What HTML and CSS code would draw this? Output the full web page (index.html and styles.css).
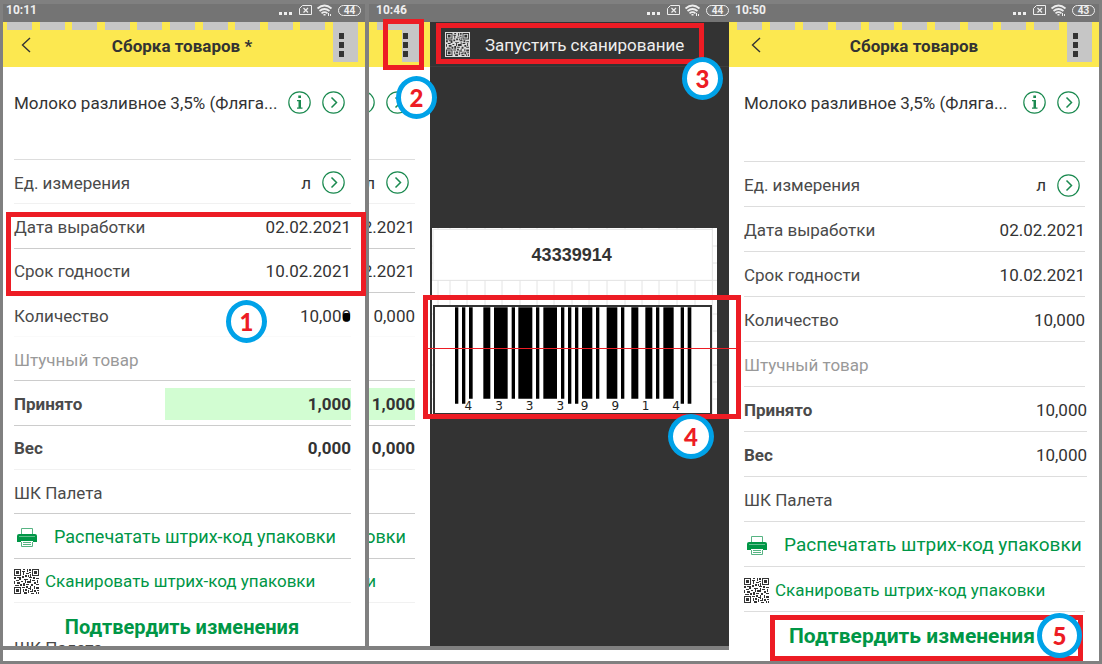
FILE: index.html
```html
<!DOCTYPE html>
<html lang="ru">

<head>
    <meta charset="UTF-8">
    <meta name="viewport" content="width=device-width, initial-scale=1.0">
    <title>Сборка товаров</title>
    <link rel="stylesheet" href="styles.css">
</head>

<body>
<svg class="defs" aria-hidden="true">
    <symbol id="qr" viewBox="0 0 25 25">
        <path d="M0 0h7v7h-7zM1 1v5h5v-5zM18 0h7v7h-7zM19 1v5h5v-5zM0 18h7v7h-7zM1 19v5h5v-5z" fill-rule="evenodd"/>
        <path d="M2 2h3v3h-3zM20 2h3v3h-3zM2 20h3v3h-3z"/>
        <path d="M9 0h2v1h-2zM13 0h1v3h-1zM15 0h2v2h-2zM8 2h3v1h-3zM9 3h1v3h-1zM12 4h3v1h-3zM15 3h2v1h-2zM11 6h2v2h-2zM14 6h1v2h-1zM16 5h1v3h-1zM8 7h2v2h-2z
        M0 8h2v2h-2zM3 8h4v1h-4zM5 9h2v2h-2zM2 11h3v1h-3zM0 12h1v3h-1zM3 13h3v2h-3zM7 12h2v1h-2zM1 16h4v1h-4zM6 15h2v2h-2z
        M10 10h4v1h-4zM11 11h1v3h-1zM13 12h3v2h-3zM9 14h2v3h-2zM12 15h3v1h-3zM16 10h1v4h-1zM15 8h3v1h-3z
        M19 8h2v2h-2zM22 9h3v1h-3zM18 11h3v1h-3zM23 11h1v3h-1zM20 13h2v2h-2zM17 15h2v2h-2zM22 15h3v1h-3zM20 17h1v3h-1z
        M8 18h3v1h-3zM9 20h1v3h-1zM11 20h2v2h-2zM12 17h2v2h-2zM14 19h3v1h-3zM16 17h1v4h-1zM14 21h1v3h-1zM10 23h3v2h-3zM16 22h3v1h-3zM18 20h1v2h-1zM17 24h3v1h-3zM20 21h2v2h-2zM22 18h3v2h-3zM23 21h2v1h-2zM22 23h1v2h-1zM24 23h1v2h-1z"/>
    </symbol>
    <symbol id="next" viewBox="0 0 23 23">
        <circle cx="11.500" cy="11.500" r="10.700" fill="none" stroke="#1b8a50" stroke-width="1.200"/>
        <path d="M9.500 6.500l5 5-5 5" fill="none" stroke="#1b8a50" stroke-width="1.500"/>
    </symbol>
    <symbol id="info" viewBox="0 0 23 23">
        <circle cx="11.500" cy="11.500" r="10.700" fill="none" stroke="#1b8a50" stroke-width="1.200"/>
        <path d="M10.300 4.500h2.700v2.500h-2.700zM9 9h4v7.500h1.500v1.200H9v-1.200h1.500v-6.300H9z" fill="#1b8a50"/>
    </symbol>
    <symbol id="back" viewBox="0 0 10 16">
        <path d="M9 1L1.500 8L9 15" fill="none" stroke="#333" stroke-width="1.400"/>
    </symbol>
    <symbol id="printer" viewBox="0 0 20 19">
        <path d="M4.500 6V.5h11V6" fill="none" stroke="#57b483" stroke-width="1"/>
        <path d="M2 6h16q2 0 2 2v6H0V8q0-2 2-2z" fill="#009646"/>
        <path d="M2 8.500h16" stroke="#66bf91" stroke-width="1"/>
        <path d="M4 13h12v5.500H4z" fill="#fff"/>
        <path d="M4.500 14v4.500h11V14M6 14.500h8M6 16.500h8" fill="none" stroke="#57b483" stroke-width="1"/>
    </symbol>
    <symbol id="signal" viewBox="0 0 54 12">
        <path d="M0 8h3v3H0zM5 8h3v3H5zM10 8h3v3h-3z" fill="#eee"/>
        <path d="M23.500 1.500h9v9h-12V4.500z" fill="none" stroke="#eee" stroke-width="1"/>
        <path d="M24.500 4l4.500 4.500M29 4l-4.500 4.500" stroke="#eee" stroke-width="1.200"/>
        <path d="M38.500 4.500q7-6 14 0M40.500 7q5-4 10 0M42.500 9.300q3-2.300 6 0" fill="none" stroke="#eee" stroke-width="1.700"/>
        <path d="M44.500 10h2v1.500h-2zM49 9h1v3h-1zM51 10h1v2h-1z" fill="#eee"/>
    </symbol>
</svg>

<main class="board">
    <section class="panel panel-first">
        <div class="status">
            <span>10:11</span>
            <svg class="signal"><use href="#signal"/></svg>
            <span class="battery">44</span>
        </div>
        <header class="top">
            <div class="tiles"><i></i><i></i><i></i><i></i><i></i><i></i><i></i><i></i><i></i><i></i>
                <button class="menu" aria-label="Меню"><b></b><b></b><b></b></button>
            </div>
            <button class="back" aria-label="Назад"><svg><use href="#back"/></svg></button>
            <h1>Сборка товаров *</h1>
        </header>
        <div class="product">
            <span class="name">Молоко разливное 3,5% (Фляга...</span>
            <button class="round" aria-label="Информация"><svg><use href="#info"/></svg></button>
            <button class="round" aria-label="Открыть"><svg><use href="#next"/></svg></button>
        </div>
        <div class="rows">
            <div class="row faint"><span>Ед. измерения</span><span class="unit">л</span>
                <button class="round" aria-label="Выбрать"><svg><use href="#next"/></svg></button></div>
            <div class="row"><span>Дата выработки</span><span class="value">02.02.2021</span></div>
            <div class="row"><span>Срок годности</span><span class="value">10.02.2021</span></div>
            <div class="row clear"><span>Количество</span><span class="value locked">10,000</span></div>
            <div class="row off"><span>Штучный товар</span></div>
            <div class="row strong"><label for="accepted">Принято</label><input id="accepted" class="field" type="text" value="1,000"></div>
            <div class="row strong faint"><span>Вес</span><span class="value">0,000</span></div>
            <div class="row"><span>ШК Палета</span></div>
            <div class="row"><button class="action print"><svg class="printer"><use href="#printer"/></svg>Распечатать штрих-код упаковки</button></div>
            <div class="row faint"><button class="action"><svg class="qr"><use href="#qr"/></svg>Сканировать штрих-код упаковки</button></div>
        </div>
        <div class="bottom">
            <button class="confirm">Подтвердить изменения</button>
            <div class="under">ШК Палета</div>
        </div>
        <div class="frame frame-dates"></div>
        <div class="mark mark-1">1</div>
    </section>

    <section class="panel panel-scan">
        <div class="status">
            <span>10:46</span>
            <svg class="signal"><use href="#signal"/></svg>
            <span class="battery">44</span>
        </div>
        <div class="split">
            <div class="edge">
                <header class="top">
                    <div class="tiles"><i></i>
                        <button class="menu" aria-label="Меню"><b></b><b></b><b></b></button>
                    </div>
                </header>
                <div class="product">
                    <button class="round" aria-label="Информация"><svg><use href="#info"/></svg></button>
                    <button class="round" aria-label="Открыть"><svg><use href="#next"/></svg></button>
                </div>
                <div class="rows">
                    <div class="row faint"><span class="unit">л</span>
                        <button class="round" aria-label="Выбрать"><svg><use href="#next"/></svg></button></div>
                    <div class="row"><span class="value">2.2021</span></div>
                    <div class="row"><span class="value">2.2021</span></div>
                    <div class="row clear"><span class="value">0,000</span></div>
                    <div class="row"></div>
                    <div class="row strong"><span class="value field">1,000</span></div>
                    <div class="row strong faint"><span class="value">0,000</span></div>
                    <div class="row"></div>
                    <div class="row"><span class="action print">овки</span></div>
                    <div class="row faint"><span class="action">и</span></div>
                </div>
            </div>
            <div class="drawer">
                <button class="scan"><svg class="qr qr-light"><use href="#qr"/></svg>Запустить сканирование</button>
                <svg class="barcode" viewBox="0 0 855 561" role="img" aria-label="43339914">
                    <rect width="855" height="561" fill="#fff"/>
                    <path d="M18 0v561M54 0v561M105 0v561M159 0v561M210 0v561M264 0v561M315 0v561M366 0v561M420 0v561M471 0v561M525 0v561M579 0v561M630 0v561M681 0v561M735 0v561M789 0v561M841 0v561M0 54h855M0 105h855M0 157h855M0 207h855M0 258h855M0 309h855M0 360h855M0 411h855M0 462h855M0 513h855" stroke="#e4e4e4" stroke-width="3"/>
                    <rect x="3" y="4" width="838" height="153" fill="#fff" stroke="#e4e4e4" stroke-width="3"/>
                    <text x="419" y="98" class="code">43339914</text>
                    <g transform="translate(-36 186)">
                        <rect x="42" y="48" width="831" height="324" fill="#fff" stroke="#333" stroke-width="6"/>
                        <path d="M105 52h10v289h-10zM126 52h10v289h-10zM147 52h11v274h-11zM190 52h21v274h-21zM222 52h41v274h-41zM275 52h10v274h-10zM295 52h42v274h-42zM348 52h10v274h-10zM370 52h41v274h-41zM423 52h10v274h-10zM444 52h10v289h-10zM465 52h10v289h-10zM486 52h31v274h-31zM528 52h10v274h-10zM560 52h32v274h-32zM603 52h10v274h-10zM634 52h21v274h-21zM676 52h21v274h-21zM708 52h10v274h-10zM730 52h31v274h-31zM782 52h10v289h-10zM803 52h11v289h-11z"/>
                        <g class="digits">
                            <text x="145" y="359">4</text><text x="237" y="359">3</text><text x="329" y="359">3</text><text x="421" y="359">3</text>
                            <text x="494" y="359">9</text><text x="586" y="359">9</text><text x="677" y="359">1</text><text x="768" y="359">4</text>
                        </g>
                    </g>
                </svg>
            </div>
        </div>
        <div class="frame frame-menu"></div>
        <div class="frame frame-scan"></div>
        <div class="frame frame-code"></div>
        <div class="mark mark-2">2</div>
        <div class="mark mark-3">3</div>
        <div class="mark mark-4">4</div>
    </section>

    <section class="panel panel-last">
        <div class="status">
            <span>10:50</span>
            <svg class="signal"><use href="#signal"/></svg>
            <span class="battery">43</span>
        </div>
        <header class="top">
            <div class="tiles"><i></i><i></i><i></i><i></i><i></i><i></i><i></i><i></i><i></i><i></i>
                <button class="menu" aria-label="Меню"><b></b><b></b><b></b></button>
            </div>
            <button class="back" aria-label="Назад"><svg><use href="#back"/></svg></button>
            <h1>Сборка товаров</h1>
        </header>
        <div class="product">
            <span class="name">Молоко разливное 3,5% (Фляга...</span>
            <button class="round" aria-label="Информация"><svg><use href="#info"/></svg></button>
            <button class="round" aria-label="Открыть"><svg><use href="#next"/></svg></button>
        </div>
        <div class="rows">
            <div class="row"><span>Ед. измерения</span><span class="unit">л</span>
                <button class="round" aria-label="Выбрать"><svg><use href="#next"/></svg></button></div>
            <div class="row"><span>Дата выработки</span><span class="value">02.02.2021</span></div>
            <div class="row"><span>Срок годности</span><span class="value">10.02.2021</span></div>
            <div class="row"><span>Количество</span><span class="value">10,000</span></div>
            <div class="row off"><span>Штучный товар</span></div>
            <div class="row wide"><strong>Принято</strong><span class="value">10,000</span></div>
            <div class="row wide"><strong>Вес</strong><span class="value">10,000</span></div>
            <div class="row"><span>ШК Палета</span></div>
            <div class="row"><button class="action print"><svg class="printer"><use href="#printer"/></svg>Распечатать штрих-код упаковки</button></div>
            <div class="row"><button class="action"><svg class="qr"><use href="#qr"/></svg>Сканировать штрих-код упаковки</button></div>
        </div>
        <div class="bottom">
            <button class="confirm">Подтвердить изменения</button>
        </div>
        <div class="frame frame-confirm"></div>
        <div class="mark mark-5">5</div>
    </section>

    <div class="strip"></div>
</main>
</body>

</html>
```
FILE: styles.css
```css
* {
  box-sizing: border-box;
}
body {
  margin: 0;
  background: #808080;
  color: #4a4a4a;
  font: 17px/20px Roboto, "Liberation Sans", sans-serif;
}
button, input {
  margin: 0;
  padding: 0;
  border: 0;
  background: none;
  color: inherit;
  font: inherit;
}
svg {
  display: block;
}
.defs {
  position: absolute;
  width: 0;
  height: 0;
}
.board {
  display: grid;
  grid-template-columns: 369fr 360fr 373fr;
  grid-template-rows: auto 11px;
  row-gap: 4px;
  padding: 4px 0 3px;
}
.panel {
  position: relative;
  display: flex;
  flex-direction: column;
  min-width: 0;
  background: #fff;
}
.panel-first {
  border-left: 3px solid #808080;
  border-right: 4px solid #808080;
}
.panel-scan {
  z-index: 1;
  background: #333;
}
.panel-last {
  grid-row: 1 / 3;
  grid-column: 3;
  border-right: 3px solid #808080;
}
.strip {
  grid-column: 1 / 3;
  margin-left: 3px;
  background: #fff;
}

/* status bar */
.status {
  display: flex;
  align-items: center;
  height: 18px;
  padding: 0 4px 6px 3px;
  background: #747474;
  color: #eee;
  font-size: 12px;
  font-weight: 700;
  line-height: 12px;
}
.panel-scan .status {
  padding-left: 7px;
  padding-right: 0;
}
.panel-last .status {
  padding-left: 6px;
}
.signal {
  width: 54px;
  height: 12px;
  margin: 0 5px 0 auto;
}
.battery {
  width: 23px;
  height: 11px;
  border: 1px solid #eee;
  border-radius: 6px;
  font-size: 10px;
  font-weight: 700;
  line-height: 9px;
  text-align: center;
}

/* yellow header */
.top {
  position: relative;
  display: flex;
  align-items: center;
  justify-content: center;
  height: 45px;
  background: #fce850;
  color: #333;
}
.tiles {
  position: absolute;
  inset: 0 7px 0 4px;
  display: flex;
  justify-content: space-between;
  align-items: flex-start;
}
.tiles i {
  width: 25px;
  height: 8px;
  background: #c6c6c6;
}
.panel-last .tiles {
  left: 8px;
}
.menu {
  display: flex;
  flex-direction: column;
  gap: 3px;
  width: 25px;
  height: 40px;
  padding: 11px 6px 0;
  justify-content: flex-start;
  background: #c6c6c6;
}
.menu b {
  flex: none;
  width: 5px;
  height: 6px;
  background: #333;
}
.back {
  position: absolute;
  left: 18px;
  top: 15px;
}
.panel-last .back {
  left: 22px;
}
.back svg {
  width: 10px;
  height: 16px;
}
h1 {
  margin: 2px 4px 0 0;
  font-size: 17px;
  font-weight: 700;
}
.panel-last h1 {
  margin-right: 0;
}

/* product and its properties */
.product {
  display: flex;
  gap: 11px;
  height: 93px;
  margin: 0 14px 0 11px;
  padding: 24px 6px 0 0;
  border-bottom: 1px solid #ddd;
  color: #333;
}
.panel-last .product, .panel-last .rows {
  margin-left: 15px;
}
.panel-last .product {
  height: 95px;
  padding-right: 5px;
}
.name {
  flex: 1;
  min-width: 0;
  padding-top: 2px;
  white-space: nowrap;
}
.round svg {
  width: 23px;
  height: 23px;
}
.product .round {
  height: 23px;
}
.rows {
  display: grid;
  grid-auto-rows: 1fr;
  height: 443px;
  margin: 0 14px 0 11px;
}
.panel-last .rows {
  height: 450px;
}
.row {
  display: flex;
  align-items: center;
  justify-content: space-between;
  min-width: 0;
  padding-top: 2px;
  border-bottom: 1px solid #ccc;
  white-space: nowrap;
}
.panel-last .row {
  border-color: #ddd;
}
.row.faint {
  border-color: #f1f1f1;
}
.row.clear {
  border-color: #fafafa;
}
.off {
  color: #999;
}
.strong {
  font-weight: 700;
}
.unit {
  margin: 0 11px 0 auto;
  color: #333;
}
.row .round {
  margin-right: 6px;
}
.panel-last .row .round {
  margin-right: 5px;
}
.wide {
  margin-right: -2px;
}
.value, .field {
  color: #333;
}
.field {
  width: 186px;
  height: 32px;
  background: #d2fdd2;
  line-height: 32px;
  text-align: right;
}
.locked {
  position: relative;
}
.locked::after {
  content: "";
  position: absolute;
  right: 1px;
  bottom: 5px;
  width: 7px;
  height: 8px;
  border-radius: 2px;
  background: #000;
}
.action {
  display: flex;
  align-items: center;
  gap: 6px;
  color: #009646;
}
.print {
  gap: 17px;
  padding-left: 3px;
  font-size: 18px;
}
.panel-last .print {
  font-size: 19px;
}
.printer {
  width: 20px;
  height: 19px;
}
.qr {
  width: 25px;
  height: 25px;
  fill: #333;
}
.bottom {
  flex: 1;
  height: 43px;
  padding: 13px 4px 0 0;
  overflow: hidden;
}
.panel-first .bottom {
  flex: none;
}
.confirm {
  display: block;
  width: 100%;
  color: #009646;
  font-size: 20px;
  font-weight: 700;
  line-height: 22px;
}
.panel-last .confirm {
  font-size: 21px;
}
.under {
  padding-left: 11px;
}

/* visible edge of the page behind the drawer */
.split {
  flex: 1;
  display: flex;
}
.edge {
  width: 61px;
  overflow: hidden;
  background: #fff;
}
.edge .tiles {
  inset: 0 9px 0 8px;
}
.edge .menu {
  width: 19px;
  padding: 11px 1px 0;
}
.edge .product, .edge .rows {
  margin: 0 15px 0 0;
}
.edge .product, .edge .row {
  justify-content: flex-end;
}
.edge .product svg {
  flex: none;
}
.edge .print {
  padding-right: 9px;
}
.edge .action:not(.print) {
  padding-right: 39px;
}
.drawer {
  flex: 1;
}
.scan {
  display: flex;
  align-items: center;
  gap: 15px;
  width: 100%;
  height: 45px;
  padding: 1px 0 0 15px;
  border-bottom: 1px solid #3d3d3d;
  color: #eee;
}
.qr-light {
  padding: 1px;
  background: #ddd;
}
.barcode {
  width: 285px;
  height: 187px;
  margin: 161px 0 0 2px;
}
.code {
  fill: #333;
  font: bold 54px "Liberation Sans", sans-serif;
  text-anchor: middle;
}
.digits {
  fill: #222;
  font: 36px "DejaVu Sans", sans-serif;
  text-anchor: middle;
}

/* callouts */
.frame {
  position: absolute;
  border: 5px solid #ed1c24;
}
.frame-dates {
  inset: 208px -1px auto 3px;
  height: 84px;
}
.frame-menu {
  left: 14px;
  top: 15px;
  width: 41px;
  height: 51px;
}
.frame-scan {
  inset: 19px 25px auto 67px;
  height: 41px;
}
.frame-code {
  inset: 291px -12px auto 54px;
  height: 124px;
}
.frame-code::after {
  content: "";
  position: absolute;
  inset: 48px 0 auto;
  height: 1px;
  background: #ed1c24;
}
.frame-confirm {
  inset: auto 16px 0 41px;
  height: 46px;
}
.mark {
  position: absolute;
  display: flex;
  align-items: center;
  justify-content: center;
  width: 41px;
  height: 43px;
  border: 5px solid #00a2e8;
  border-radius: 50%;
  background: #fff;
  color: #ed1c24;
  font: 900 24px/24px Lato, sans-serif;
}
.mark-1 {
  right: 98px;
  top: 296px;
}
.mark-2 {
  left: 27px;
  top: 72px;
}
.mark-3 {
  right: 6px;
  top: 53px;
}
.mark-4 {
  right: 15px;
  top: 410px;
  width: 46px;
  height: 45px;
}
.mark-5 {
  right: 17px;
  bottom: 3px;
  width: 45px;
  height: 45px;
}
```
